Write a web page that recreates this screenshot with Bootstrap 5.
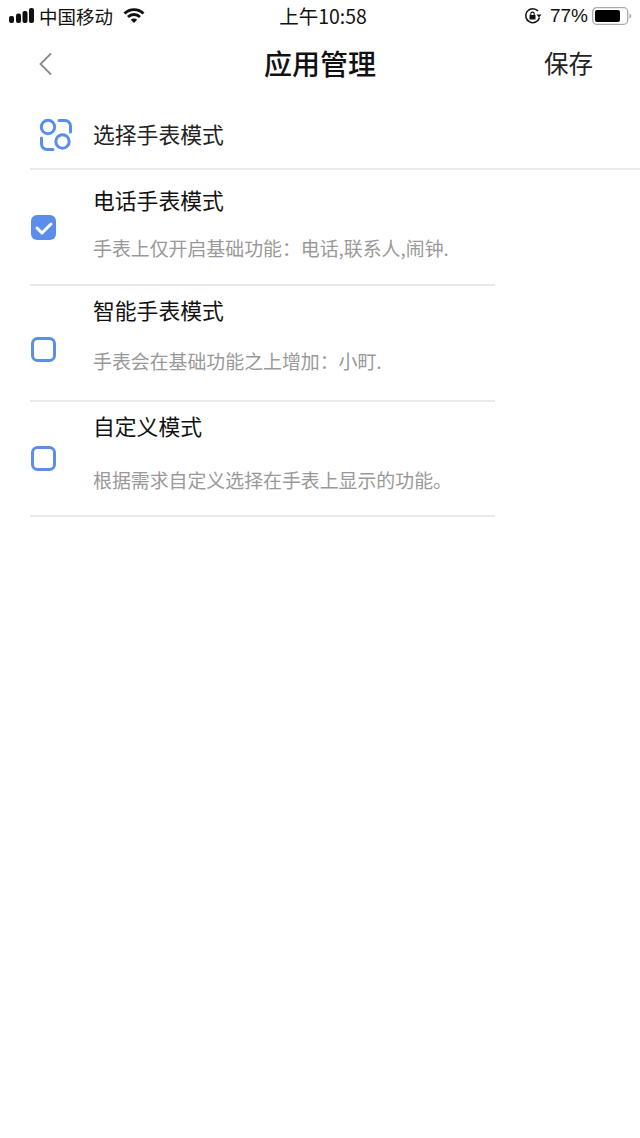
<!DOCTYPE html>
<html lang="zh-CN">
<head>
<meta charset="utf-8">
<title>应用管理</title>
<link href="https://cdn.jsdelivr.net/npm/bootstrap@5.3.0/dist/css/bootstrap.min.css" rel="stylesheet">
<style>
html,body{height:100%}
body{background:#fff;color:#111;font-family:"Noto Sans CJK SC","Liberation Sans",sans-serif;overflow:hidden}
.stat-bar{height:32px;padding:0 8px 0 9px;font-size:18.5px;line-height:32px;color:#111}
.stat-side{width:230px}
.stat-time{font-size:19.5px;padding-left:5px}
.stat-pct{font-family:"Liberation Sans",sans-serif;font-size:19px}
.wifi-gap{margin-left:6px}
.app-bar{height:62px;padding:0 38px}
.app-title{font-size:28px;font-weight:500;line-height:1}
.app-side{flex:1 1 0}
.back-mark{margin-top:2px}
.app-save{font-size:24.5px;line-height:1;color:#222;margin-right:9px}
.sect-head{height:76px;margin-left:30px;padding:6px 0 0 63px;border-bottom:2px solid #e9e9e9;font-size:21.8px;color:#222;position:relative}
.sect-icon{position:absolute;left:9px;top:24px}
.opt-row{width:465px;margin-left:30px;border-bottom:2px solid #e9e9e9}
.opt-a{height:116px}
.opt-b{height:116px}
.opt-c{height:115px}
.tick-box{width:26px;margin-left:1px}
.opt-text{padding-left:36px}
.opt-name{font-size:21.8px;line-height:1;color:#111}
.opt-note{font-size:18.9px;line-height:1;color:#999}
.opt-a .opt-name{margin-top:19px}.opt-a .opt-note{margin-top:28px}
.opt-b .opt-name{margin-top:13px}.opt-b .opt-note{margin-top:31px}
.opt-c .opt-name{margin-top:13px}.opt-c .opt-note{margin-top:34px}
.opt-a .tick-box{padding-top:45px}
.opt-b .tick-box{padding-top:51px}
.opt-c .tick-box{padding-top:44px}
</style>
</head>
<body>
<div class="stat-bar d-flex align-items-center justify-content-between">
  <div class="stat-side d-flex align-items-center gap-1">
    <svg width="26" height="16" viewBox="0 0 26 16"><g fill="#111"><rect x="0" y="8" width="5" height="7" rx="2"/><rect x="7" y="5.500" width="5" height="9.500" rx="2"/><rect x="13.500" y="3" width="5" height="12" rx="2"/><rect x="20" y="0" width="5" height="15" rx="2"/></g></svg>
    <span>中国移动</span>
    <svg class="wifi-gap" width="22" height="16" viewBox="0 0 22 16"><path d="M1.500 5.500a13.500 13.500 0 0 1 19 0" fill="none" stroke="#111" stroke-width="2.800"/><path d="M5 9a8.500 8.500 0 0 1 12 0" fill="none" stroke="#111" stroke-width="2.800"/><path d="M7.800 11.800a4.500 4.500 0 0 1 6.400 0L11 15z" fill="#111"/></svg>
  </div>
  <div class="stat-time">上午10:58</div>
  <div class="stat-side d-flex align-items-center justify-content-end gap-1">
    <svg class="me-1" width="18" height="18" viewBox="0 0 18 18"><path d="M15.500 10.500A7 7 0 1 1 14 4" fill="none" stroke="#111" stroke-width="1.500"/><path d="M17.500 7.500h-5l2.500 3z" fill="#111"/><rect x="5.500" y="8" width="6" height="4.500" rx=".6" fill="#111"/><path d="M6.800 8V6.800a1.700 1.700 0 0 1 3.400 0V8" fill="none" stroke="#111" stroke-width="1.100"/></svg>
    <span class="stat-pct">77%</span>
    <svg width="40" height="20" viewBox="0 0 40 20"><rect x=".7" y="1.700" width="35" height="16.600" rx="4" fill="none" stroke="#aaa" stroke-width="1.300"/><rect x="3" y="4" width="25" height="12" rx="2" fill="#000"/><path d="M37.500 7.500c1.200.4 1.800 1.200 1.800 2.500s-.6 2.100-1.800 2.500z" fill="#aaa"/></svg>
  </div>
</div>

<div class="app-bar d-flex align-items-center">
  <div class="app-side"><svg width="16" height="26" viewBox="0 0 16 26" class="d-block back-mark"><path d="M13 2.500 2.500 13 13 23.500" fill="none" stroke="#8a8a8a" stroke-width="1.800"/></svg></div>
  <div class="app-title">应用管理</div>
  <div class="app-side text-end text-nowrap"><div class="app-save">保存</div></div>
</div>

<div class="sect-head d-flex align-items-center">
  <svg class="sect-icon" width="34" height="34" viewBox="0 0 34 34" fill="none" stroke="#5b8dea" stroke-width="3"><circle cx="9" cy="9" r="6.700"/><circle cx="23.500" cy="23.500" r="6.700"/><path d="M20 2.500h6a5.500 5.500 0 0 1 5.500 5.500v6M14 31.500H8A5.500 5.500 0 0 1 2.500 26v-6" stroke-linecap="round"/></svg>
  <span>选择手表模式</span>
</div>

<div class="opt-row opt-a d-flex">
  <div class="tick-box flex-shrink-0"><svg width="26" height="26" viewBox="0 0 26 26" class="d-block"><rect width="25" height="25" rx="6" fill="#5b8dea"/><path d="M6 13l5 5 9-9" fill="none" stroke="#fff" stroke-width="3" stroke-linecap="round" stroke-linejoin="round"/></svg></div>
  <div class="opt-text"><div class="opt-name">电话手表模式</div><div class="opt-note">手表上仅开启基础功能：电话,联系人,闹钟.</div></div>
</div>
<div class="opt-row opt-b d-flex">
  <div class="tick-box flex-shrink-0"><svg width="26" height="26" viewBox="0 0 26 26" class="d-block"><rect x="1.500" y="1.500" width="22" height="22" rx="5" fill="none" stroke="#5b8dea" stroke-width="3"/></svg></div>
  <div class="opt-text"><div class="opt-name">智能手表模式</div><div class="opt-note">手表会在基础功能之上增加：小町.</div></div>
</div>
<div class="opt-row opt-c d-flex">
  <div class="tick-box flex-shrink-0"><svg width="26" height="26" viewBox="0 0 26 26" class="d-block"><rect x="1.500" y="1.500" width="22" height="22" rx="5" fill="none" stroke="#5b8dea" stroke-width="3"/></svg></div>
  <div class="opt-text"><div class="opt-name">自定义模式</div><div class="opt-note">根据需求自定义选择在手表上显示的功能。</div></div>
</div>
<script src="https://cdn.jsdelivr.net/npm/bootstrap@5.3.0/dist/js/bootstrap.bundle.min.js"></script>
</body>
</html>
